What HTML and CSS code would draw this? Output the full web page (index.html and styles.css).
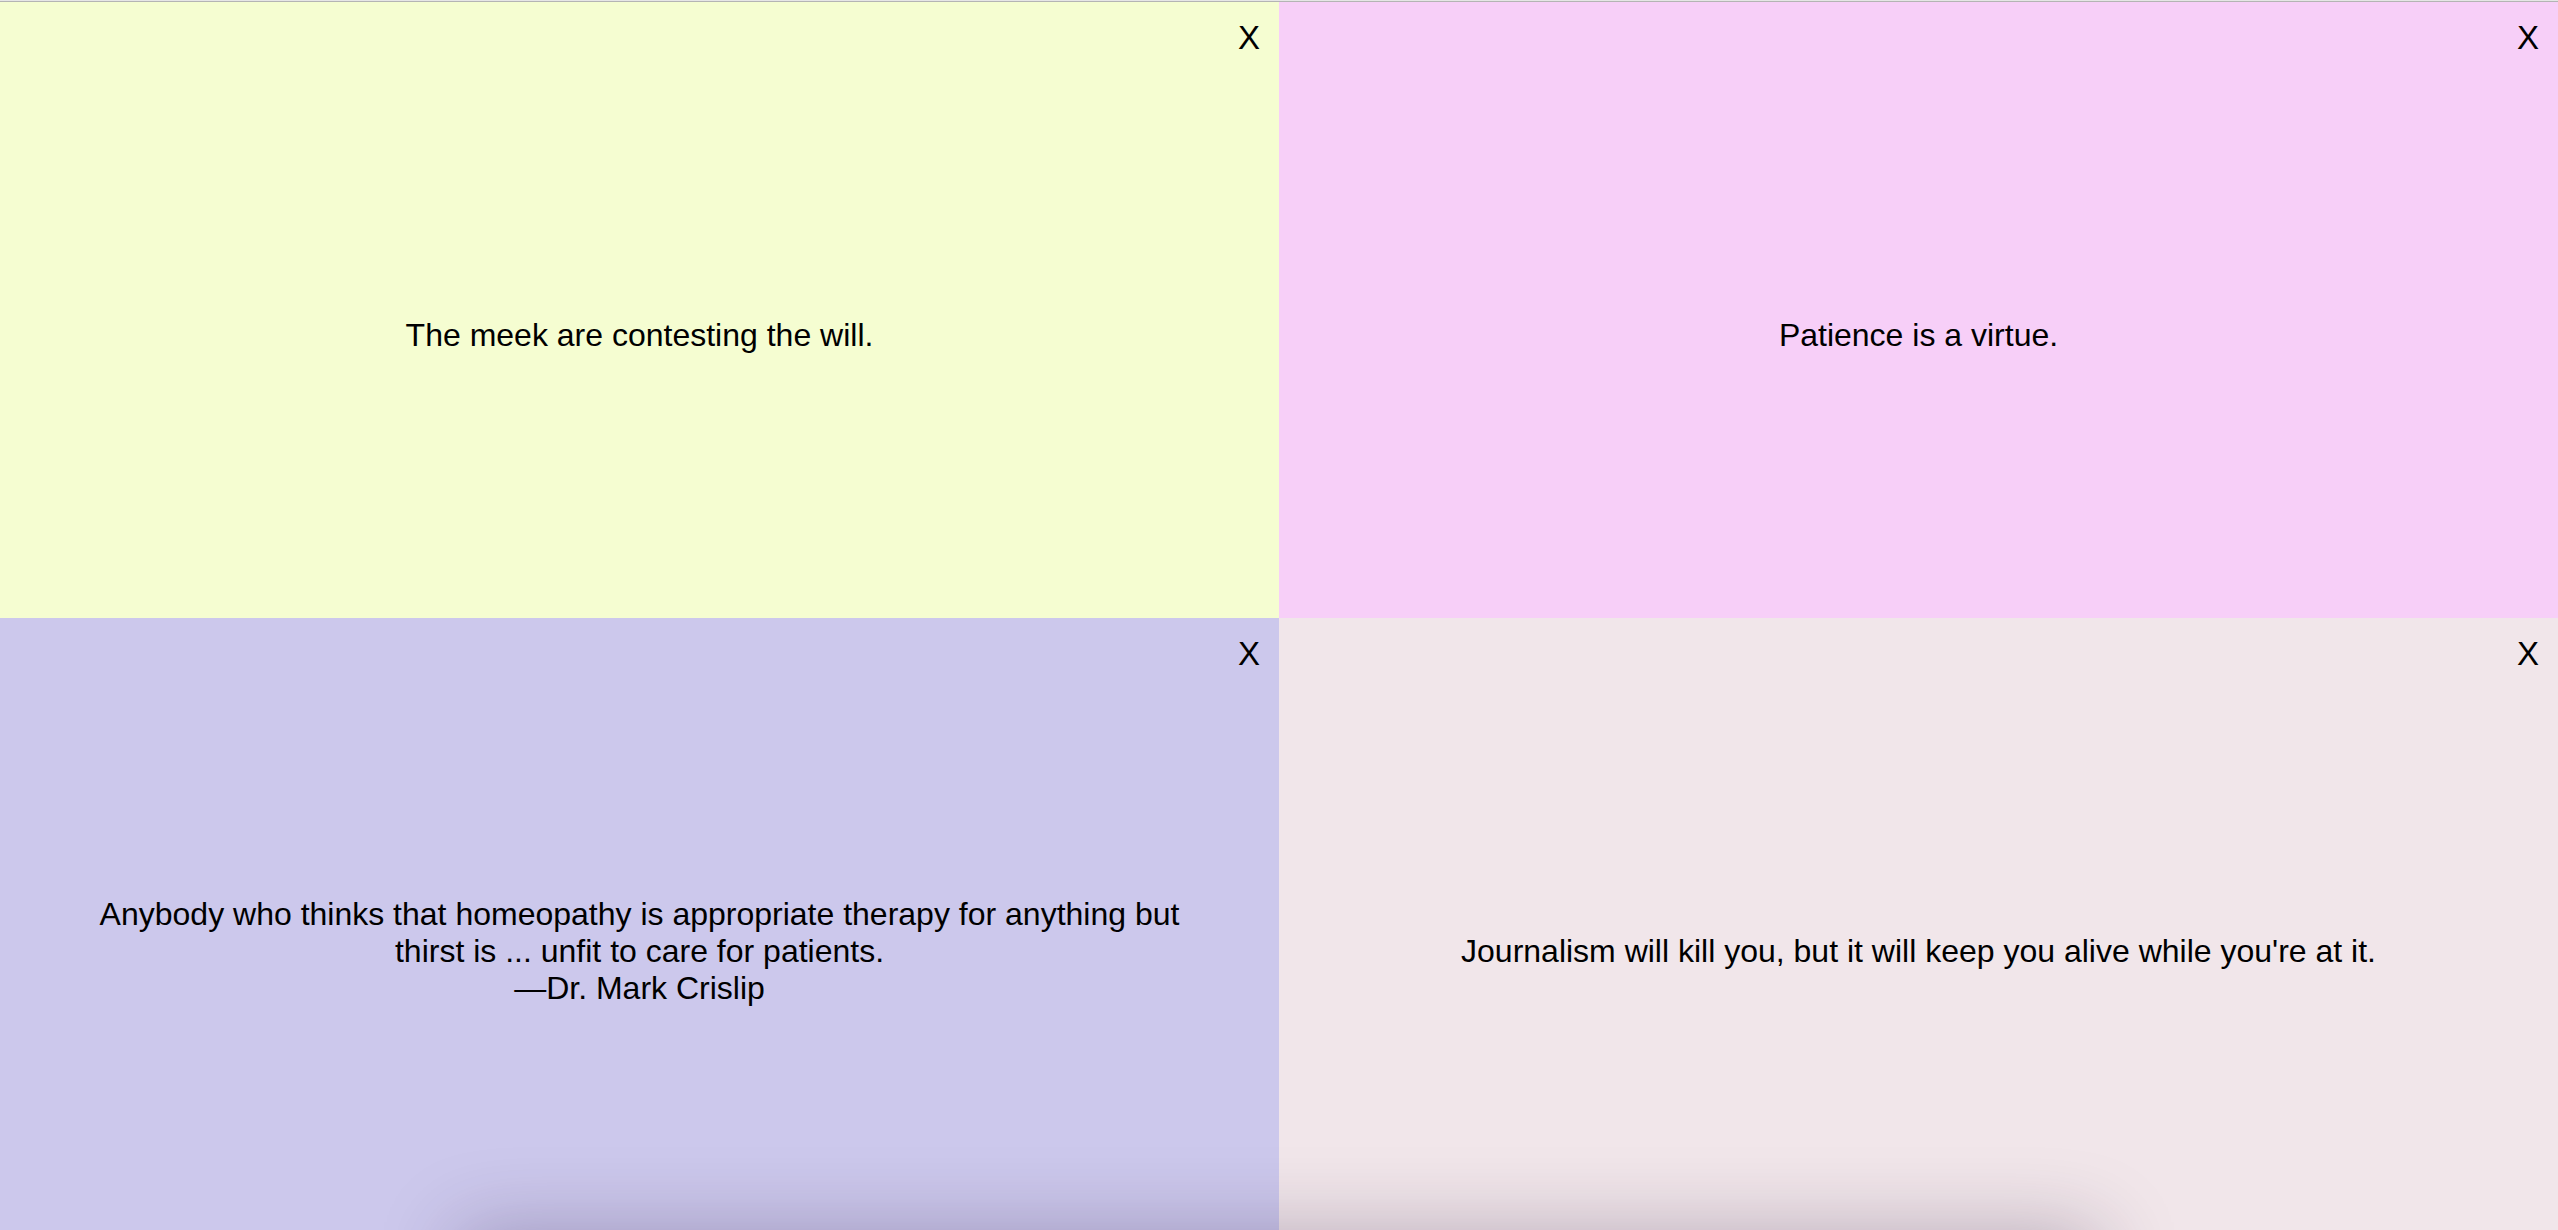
FILE: index.html
```html
<!DOCTYPE html>
<html lang="en">
<head>
<meta charset="utf-8">
<title>Quotes</title>
<link rel="stylesheet" href="styles.css">
</head>
<body>
<div class="topline"></div>
<main class="board">
  <section class="note note-yellow">
    <button class="close">X</button>
    <p class="quote">The meek are contesting the will.</p>
  </section>
  <section class="note note-pink">
    <button class="close">X</button>
    <p class="quote">Patience is a virtue.</p>
  </section>
  <section class="note note-lavender">
    <button class="close">X</button>
    <p class="quote">Anybody who thinks that homeopathy is appropriate therapy for anything but thirst is ... unfit to care for patients.<br><span class="author">—Dr. Mark Crislip</span></p>
  </section>
  <section class="note note-blush">
    <button class="close">X</button>
    <p class="quote">Journalism will kill you, but it will keep you alive while you're at it.</p>
  </section>
</main>
<div class="composer"></div>
</body>
</html>
```
FILE: styles.css
```css
html, body {
  margin: 0;
  padding: 0;
}
body {
  font-family: "Liberation Sans", Arial, Helvetica, sans-serif;
  font-size: 32px;
  color: #000;
  background: #fff;
  overflow: hidden;
}
.topline {
  height: 1px;
  background: #e6e6e6;
  border-bottom: 1px solid #b4b4b4;
}
.board {
  display: grid;
  grid-template-columns: 1fr 1fr;
  grid-auto-rows: 616px;
}
.note {
  position: relative;
  display: flex;
  align-items: center;
  justify-content: center;
  padding: 50px 90px 0;
  box-sizing: border-box;
  text-align: center;
}
.note-yellow { background: #f5fdd1; }
.note-pink { background: #f7cff8; }
.note-lavender { background: #ccc8ec; }
.note-blush { background: #f1e6ea; }
.quote {
  margin: 0;
  line-height: normal;
}
.close {
  position: absolute;
  top: 17px;
  right: 19px;
  padding: 0;
  border: 0;
  background: none;
  font-family: inherit;
  font-size: 33px;
  line-height: normal;
  color: #000;
  cursor: pointer;
}
.composer {
  position: relative;
  z-index: 1;
  width: 1640px;
  height: 200px;
  margin: 0 auto;
  background: #f4f4f4;
  box-shadow: 0 -4px 80px rgba(40, 20, 60, 0.28);
}
```
